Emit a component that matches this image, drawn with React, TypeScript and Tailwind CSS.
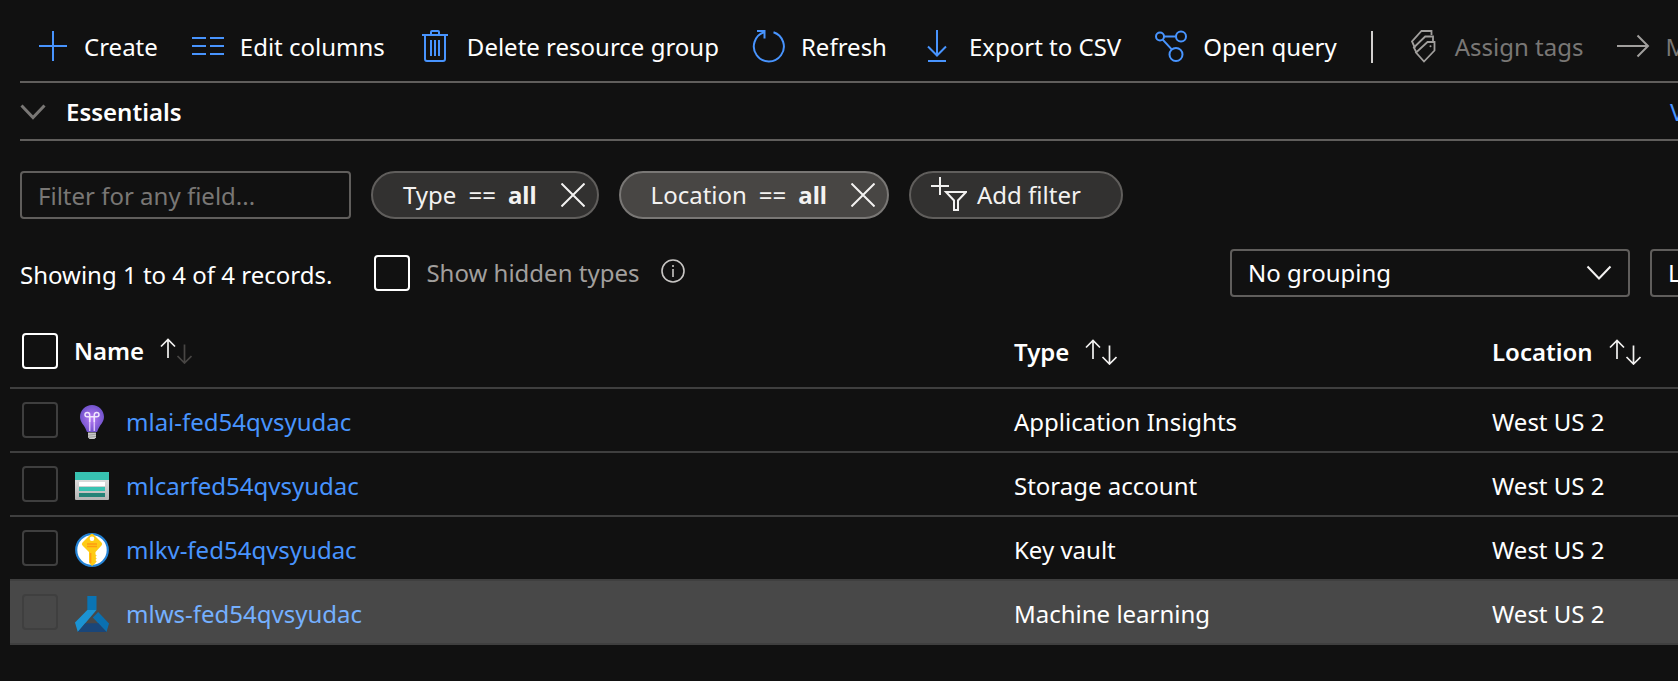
import React from "react";

const ICON = "h-8 w-8 shrink-0 overflow-visible";

function PlusIcon() {
  return (
    <svg className={ICON} viewBox="0 0 32 32" fill="none" stroke="#4894fe" strokeWidth="2" aria-hidden="true">
      <path d="M17 0v30M3 15h28" />
    </svg>
  );
}

function ColumnsIcon() {
  return (
    <svg className={ICON} viewBox="0 0 32 32" fill="none" stroke="#4894fe" strokeWidth="2" aria-hidden="true">
      <path d="M0 7h14M18 7h14M0 15h14M18 15h14M0 23h14M18 23h14" />
    </svg>
  );
}

function TrashIcon() {
  return (
    <svg className={ICON} viewBox="0 0 32 32" fill="none" stroke="#4894fe" strokeWidth="2" strokeLinejoin="round" aria-hidden="true">
      <path d="M3 4h26M12 4V1q0-1 1-1h6q1 0 1 1v3M6 4v24q0 2 2 2h16q2 0 2-2V4M12 9v16M16 9v16M20 9v16" />
    </svg>
  );
}

function RefreshIcon() {
  return (
    <svg className={ICON} viewBox="0 0 32 32" fill="none" stroke="#4894fe" strokeWidth="2" aria-hidden="true">
      <path d="M20.500 1.200A15 15 0 1 1 11.200 1.200" />
      <path d="M4 0h7.500v7.500" />
    </svg>
  );
}

function DownloadIcon() {
  return (
    <svg className={ICON} viewBox="0 0 32 32" fill="none" stroke="#4894fe" strokeWidth="2" aria-hidden="true">
      <path d="M16 -1v25M7 15.500l9 9 9-9M7 30h18" />
    </svg>
  );
}

function QueryIcon() {
  return (
    <svg className={ICON} viewBox="0 0 32 32" fill="none" stroke="#4894fe" strokeWidth="2" aria-hidden="true">
      <circle cx="5" cy="5.500" r="4" />
      <circle cx="26" cy="5.500" r="5" />
      <circle cx="21" cy="23.500" r="6.500" />
      <path d="M9 5.500h12M7.700 8.600l9 9.800" />
    </svg>
  );
}

function TagsIcon() {
  return (
    <svg className={ICON} viewBox="0 0 32 32" fill="none" stroke="#a19f9d" strokeWidth="1.8" aria-hidden="true">
      <path d="M24.500 4V0H14.500L5 10.500 8 17" />
      <path d="M26 10V5.500H18.200L6.800 16.500 9.500 21.500" />
      <path d="M27.500 11h-7L9 21.500l8 9 10.500-11z" />
      <circle cx="23.500" cy="15.200" r="1" fill="#a19f9d" stroke="none" />
    </svg>
  );
}

function ArrowIcon() {
  return (
    <svg className={ICON} viewBox="0 0 32 32" fill="none" stroke="#a19f9d" strokeWidth="2" aria-hidden="true">
      <path d="M0 15h31M20.500 4.500l10.500 10.500L20.500 25.500" />
    </svg>
  );
}

function Chevron({ color, stroke = 2 }: { color: string; stroke?: number }) {
  return (
    <svg className="h-4 w-[26px] shrink-0" viewBox="0 0 26 16" fill="none" stroke={color} strokeWidth={stroke} aria-hidden="true">
      <path d="M1.500 1.500l11.500 12 11.500-12" />
    </svg>
  );
}

function CloseIcon() {
  return (
    <svg className="h-6 w-6" viewBox="0 0 24 24" fill="none" stroke="#f3f2f1" strokeWidth="2" aria-hidden="true">
      <path d="M0.500 0.500l23 23M23.500 0.500l-23 23" />
    </svg>
  );
}

function AddFilterIcon() {
  return (
    <svg className="h-9 w-9 shrink-0" viewBox="0 0 36 36" fill="none" stroke="#f3f2f1" strokeWidth="2" aria-hidden="true">
      <path d="M9 0v18M0 9h18M15 15h20l-8 8.500V33h-4v-9.500z" />
    </svg>
  );
}

function InfoIcon() {
  return (
    <svg className="h-6 w-6" viewBox="0 0 24 24" fill="none" stroke="#c8c6c4" strokeWidth="1.6" aria-hidden="true">
      <circle cx="12" cy="12" r="11" />
      <path d="M12 10v8M12 6v2" />
    </svg>
  );
}

function SortIcon({ down }: { down: string }) {
  return (
    <svg className="h-[26px] w-8" viewBox="0 0 32 26" fill="none" strokeWidth="1.7" aria-hidden="true">
      <path stroke="#f3f2f1" d="M8 20V1.500M1 8.500l7-7 7 7" />
      <path stroke={down} d="M24.500 6.500v18.500M17.500 18l7 7 7-7" />
    </svg>
  );
}

function InsightsIcon() {
  return (
    <svg className="h-[34px] w-[34px]" viewBox="0 0 34 34" aria-hidden="true">
      <defs>
        <radialGradient id="bulb" cx="0.5" cy="0.5" r="0.55">
          <stop offset="0" stopColor="#b77af4" />
          <stop offset="1" stopColor="#6a4fc8" />
        </radialGradient>
      </defs>
      <path fill="url(#bulb)" d="M17 0C10.400 0 5 5.200 5 11.800c0 4.600 2.600 6.900 4.500 9.900 1.300 2.100 1.900 4.100 2.500 5.300h10c.6-1.200 1.200-3.200 2.500-5.300 1.900-3 4.500-5.300 4.500-9.900C29 5.200 23.600 0 17 0z" />
      <path fill="none" stroke="#d9bdfa" strokeWidth="1.500" d="M14.700 26V12M19.300 26V12" />
      <path fill="none" stroke="#f0e6fd" strokeWidth="1.500" d="M14.700 17V10q0-2.400-2.400-2.400T10 9.700t2.300 2h9.400q2.300 0 2.300-2t-2.300-2.100-2.400 2.400v7" />
      <path fill="#c8c8c8" d="M13 27.500h8v4.800L19.500 34h-5L13 32.300z" />
      <path stroke="#9a9a9a" strokeWidth="0.900" d="M13 30.200l8-1M13 32.400l8-1" />
    </svg>
  );
}

function StorageIcon() {
  return (
    <svg className="h-[34px] w-[34px]" viewBox="0 0 34 34" aria-hidden="true">
      <defs>
        <linearGradient id="box" x1="0" y1="1" x2="0" y2="0">
          <stop offset="0" stopColor="#b3b3b3" />
          <stop offset="1" stopColor="#ececec" />
        </linearGradient>
      </defs>
      <rect y="3" width="34" height="28" rx="1" fill="url(#box)" />
      <path fill="#37c2b1" d="M0 11V4q0-1 1-1h32q1 0 1 1v7z" />
      <rect x="4" y="13" width="26" height="4" fill="#fff" />
      <rect x="4" y="18" width="26" height="4" fill="#37c2b1" />
      <rect x="4" y="24" width="26" height="4" fill="#258277" />
    </svg>
  );
}

function KeyVaultIcon() {
  return (
    <svg className="h-[34px] w-[34px]" viewBox="0 0 34 34" aria-hidden="true">
      <circle cx="17" cy="17" r="15.800" fill="#fff" stroke="#2483d6" strokeWidth="2.200" />
      <path fill="#fecb15" d="M15.500 1.500q1.500-1.500 3 0l8 8q1.500 1.500 0 3L20.500 19v2.500l1.200 1-1.200 1.500 1.200 1.500-1.200 1.500 1.200 1.500-1.700 2L17 33l-3-3.200V19l-6.500-6.500q-1.500-1.500 0-3z" />
      <circle cx="17" cy="5.800" r="2.300" fill="#fff" />
      <path fill="none" stroke="#ff9b11" strokeWidth="1.500" d="M12 11h10M12 13.500h10" />
      <path fill="none" stroke="#ff9b11" strokeWidth="1.500" d="M15.600 20v10" />
    </svg>
  );
}

function MachineLearningIcon() {
  return (
    <svg className="h-9 w-[34px]" viewBox="0 0 34 36" aria-hidden="true">
      <path fill="#0a74b4" d="M12.300 0h9.200v14h-9.200z" />
      <path fill="#1b93d3" d="M12.300 14h9.200L2.800 36 0 26.500z" />
      <path fill="#0a70b0" d="M23.200 16L34 27.500 31.500 36 17.800 21.500z" />
      <path fill="#1a4679" d="M10.300 27.300h13L31.500 36H2.800z" />
    </svg>
  );
}

function CommandButton({ icon, children, disabled }: { icon: React.ReactNode; children: React.ReactNode; disabled?: boolean }) {
  return (
    <button type="button" disabled={disabled} className="flex shrink-0 items-center gap-4 text-white disabled:text-[#797775]">
      {icon}
      {children}
    </button>
  );
}

function Checkbox({ label, id, bright }: { label?: string; id: string; bright?: boolean }) {
  return (
    <input
      type="checkbox"
      id={id}
      aria-label={label}
      className={`block h-9 w-9 shrink-0 appearance-none rounded border-2 bg-transparent ${bright ? "border-white" : "border-[#3f3f3f]"}`}
    />
  );
}

function FilterPill({ field, active }: { field: string; active?: boolean }) {
  return (
    <div
      className={`flex h-12 items-center gap-6 rounded-full border-2 pr-3 pl-[30px] text-[#f3f2f1] ${
        active ? "border-[#797775] bg-[#484644]" : "border-[#605e5c] bg-[#323130]"
      }`}
    >
      <button type="button" className="flex gap-3">
        <span>{field}</span>
        <span>==</span>
        <b>all</b>
      </button>
      <button type="button" aria-label={`Remove ${field} filter`}>
        <CloseIcon />
      </button>
    </div>
  );
}

function Dropdown({ label, value, width }: { label: string; value: string; width: string }) {
  return (
    <div className={`relative ${width}`}>
      <select aria-label={label} className="h-12 w-full appearance-none rounded border-2 border-[#605e5c] bg-[#111] pr-12 pl-4 text-white">
        <option>{value}</option>
      </select>
      <span className="pointer-events-none absolute inset-y-0 right-[18px] flex items-center">
        <Chevron color="#f3f2f1" />
      </span>
    </div>
  );
}

const resources = [
  { name: "mlai-fed54qvsyudac", type: "Application Insights", location: "West US 2", icon: <InsightsIcon /> },
  { name: "mlcarfed54qvsyudac", type: "Storage account", location: "West US 2", icon: <StorageIcon /> },
  { name: "mlkv-fed54qvsyudac", type: "Key vault", location: "West US 2", icon: <KeyVaultIcon /> },
  { name: "mlws-fed54qvsyudac", type: "Machine learning", location: "West US 2", icon: <MachineLearningIcon />, hovered: true },
];

export default function App() {
  return (
    <div className="min-h-screen overflow-hidden bg-[#111] font-['Noto_Sans',sans-serif] text-2xl leading-8 whitespace-nowrap text-white">
      <main className="w-[calc(100%+172px)]">
        <div role="toolbar" aria-label="Resource group commands" className="ml-5 flex gap-[34px] border-b-2 border-[#605e5c] pt-[31px] pb-[18px] pl-4">
          <CommandButton icon={<PlusIcon />}>Create</CommandButton>
          <CommandButton icon={<ColumnsIcon />}>Edit columns</CommandButton>
          <CommandButton icon={<TrashIcon />}>Delete resource group</CommandButton>
          <CommandButton icon={<RefreshIcon />}>Refresh</CommandButton>
          <CommandButton icon={<DownloadIcon />}>Export to CSV</CommandButton>
          <CommandButton icon={<QueryIcon />}>Open query</CommandButton>
          <span className="w-0.5 shrink-0 bg-[#d2d0ce]" />
          <CommandButton icon={<TagsIcon />} disabled>Assign tags</CommandButton>
          <CommandButton icon={<ArrowIcon />} disabled>Move</CommandButton>
        </div>

        <div className="ml-5 flex h-[58px] items-center justify-between border-b-2 border-[#605e5c] pt-0.5">
          <button type="button" className="flex items-center gap-5 font-semibold">
            <Chevron color="#797775" stroke={3} />
            Essentials
          </button>
          <a href="#cost" className="w-[180px] text-[#4894fe]">View Cost</a>
        </div>

        <div className="mt-[30px] ml-5 flex gap-5">
          <input
            type="text"
            aria-label="Filter for any field"
            placeholder="Filter for any field..."
            className="h-12 w-[331px] rounded border-2 border-[#605e5c] bg-transparent px-4 placeholder:text-[#797775]"
          />
          <FilterPill field="Type" />
          <FilterPill field="Location" active />
          <button type="button" className="flex h-12 items-center gap-2.5 rounded-full border-2 border-[#605e5c] bg-[#323130] pr-10 pl-5 text-[#f3f2f1]">
            <AddFilterIcon />
            Add filter
          </button>
        </div>

        <div className="mt-[30px] ml-5 flex items-center">
          <p className="mr-[42px] pt-[3px]">Showing 1 to 4 of 4 records.</p>
          <Checkbox id="hidden-types" bright />
          <label htmlFor="hidden-types" className="mr-[22px] ml-4 text-[#a19f9d]">Show hidden types</label>
          <button type="button" aria-label="About hidden types" className="pb-1">
            <InfoIcon />
          </button>
          <div className="ml-auto flex gap-5">
            <Dropdown label="Grouping" value="No grouping" width="w-[400px]" />
            <Dropdown label="View" value="List view" width="w-[200px]" />
          </div>
        </div>

        <table className="mt-[18px] ml-2.5 w-[calc(100%-10px)] table-fixed border-separate border-spacing-0 text-left">
          <colgroup>
            <col />
            <col className="w-[478px]" />
            <col className="w-[358px]" />
          </colgroup>
          <thead>
            <tr className="h-[74px]">
              <th className="border-b-2 border-[#3f3f3f] pl-3 font-semibold">
                <div className="flex items-center gap-4">
                  <Checkbox id="select-all" label="Select all" bright />
                  <button type="button" className="flex items-center gap-4">
                    Name
                    <SortIcon down="#484644" />
                  </button>
                </div>
              </th>
              {["Type", "Location"].map((heading) => (
                <th key={heading} className="border-b-2 border-[#3f3f3f] pt-0.5 font-semibold">
                  <button type="button" className="flex items-center gap-4">
                    {heading}
                    <SortIcon down="#f3f2f1" />
                  </button>
                </th>
              ))}
            </tr>
          </thead>
          <tbody>
            {resources.map((r) => (
              <tr key={r.name} className={`h-16 ${r.hovered ? "bg-[#484848]" : ""}`}>
                <td className="border-b-2 border-[#3f3f3f] pl-3">
                  <div className="flex items-center">
                    <Checkbox id={r.name} label={`Select ${r.name}`} />
                    <span className="mt-1 ml-[17px] flex items-center gap-[17px]">
                      {r.icon}
                      <a href={`#${r.name}`} className={r.hovered ? "text-[#75b0ff]" : "text-[#4894fe]"}>{r.name}</a>
                    </span>
                  </div>
                </td>
                <td className="border-b-2 border-[#3f3f3f] pt-[3px]">{r.type}</td>
                <td className="border-b-2 border-[#3f3f3f] pt-[3px]">{r.location}</td>
              </tr>
            ))}
          </tbody>
        </table>
      </main>
    </div>
  );
}
